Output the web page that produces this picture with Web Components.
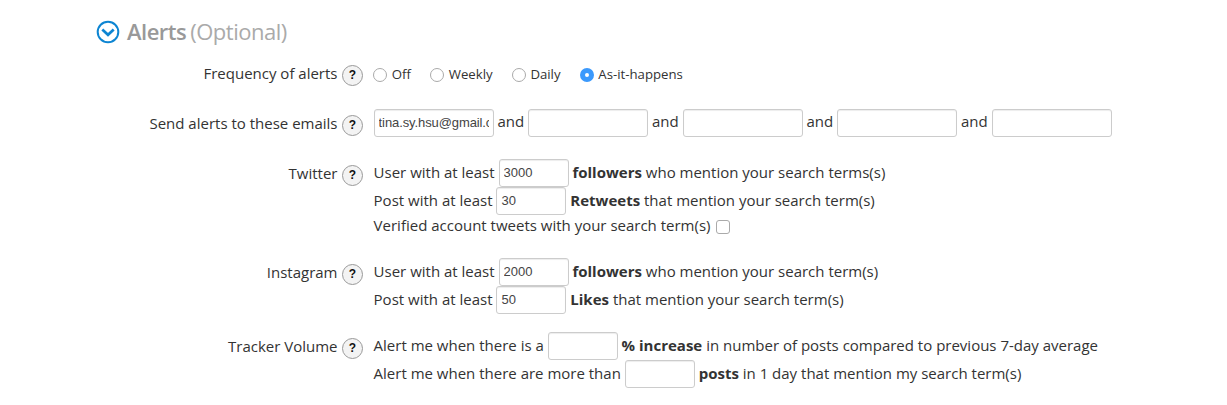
<!DOCTYPE html>
<html lang="en">
<head>
<meta charset="utf-8">
<title>Alerts</title>
<style>
  body {
    margin: 0;
    background: #fff;
    color: #333;
    font: 15px/20px "Open Sans", sans-serif;
  }
</style>
</head>
<body>
<alert-settings>
  <section-title slot="title" note="(Optional)">Alerts</section-title>

  <form-row label="Frequency of alerts" style="--height: 20px; --label-height: 16px; --icon-shift: 4px; --column-gap: 10.4px">
    <radio-option>Off</radio-option>
    <radio-option>Weekly</radio-option>
    <radio-option>Daily</radio-option>
    <radio-option checked>As-it-happens</radio-option>
  </form-row>

  <form-row label="Send alerts to these emails" style="--gap: 24px">
    <form-line style="--line: 24px"><text-box value="tina.sy.hsu@gmail.com" wide></text-box> and <text-box wide></text-box> and <text-box wide></text-box> and <text-box wide></text-box> and <text-box wide></text-box></form-line>
  </form-row>

  <form-row label="Twitter" style="--gap: 22px">
    <form-line>User with at least <text-box value="3000"></text-box> <b>followers</b> who mention your search terms(s)</form-line>
    <form-line>Post with at least <text-box value="30"></text-box> <b>Retweets</b> that mention your search term(s)</form-line>
    <form-line short>Verified account tweets with your search term(s) <check-box></check-box></form-line>
  </form-row>

  <form-row label="Instagram" style="--gap: 21px">
    <form-line>User with at least <text-box value="2000"></text-box> <b>followers</b> who mention your search term(s)</form-line>
    <form-line>Post with at least <text-box value="50"></text-box> <b>Likes</b> that mention your search term(s)</form-line>
  </form-row>

  <form-row label="Tracker Volume" style="--gap: 18px">
    <form-line>Alert me when there is a <text-box></text-box> <b>% increase</b> in number of posts compared to previous 7-day average</form-line>
    <form-line>Alert me when there are more than <text-box></text-box> <b>posts</b> in 1 day that mention my search term(s)</form-line>
  </form-row>
</alert-settings>

<script>
class AlertSettings extends HTMLElement {
  connectedCallback() {
    this.attachShadow({ mode: "open" });
    this.shadowRoot.innerHTML = `
      <style>
        :host {
          display: block;
          box-sizing: border-box;
          height: 405px;
          padding: 16px 0 0 96px;
          overflow: hidden;
        }
        .rows {
          display: flex;
          flex-direction: column;
        }
      </style>
      <slot name="title"></slot>
      <div class="rows"><slot></slot></div>
    `;
  }
}

class SectionTitle extends HTMLElement {
  connectedCallback() {
    this.attachShadow({ mode: "open" });
    this.shadowRoot.innerHTML = `
      <style>
        :host {
          display: flex;
          align-items: center;
          height: 32px;
          color: #999;
          font-size: 22px;
          letter-spacing: -0.5px;
        }
        svg {
          width: 24px;
          height: 24px;
          margin-right: 7px;
        }
        h2,
        span {
          margin: 0 0 2px;
          font-size: inherit;
          font-weight: 600;
        }
        span {
          margin-left: 4px;
          color: #aaa;
          font-weight: 400;
        }
      </style>
      <svg viewBox="0 0 24 24" fill="none" stroke="#0d85d2">
        <circle cx="12" cy="12" r="10.3" stroke-width="2"/>
        <path d="M6.3 9.6l5.7 5.2 5.7-5.2" stroke-width="2.7"/>
      </svg>
      <h2><slot></slot></h2>
      <span>${this.getAttribute("note")}</span>
    `;
  }
}

class FormRow extends HTMLElement {
  connectedCallback() {
    this.attachShadow({ mode: "open" });
    this.shadowRoot.innerHTML = `
      <style>
        :host {
          display: grid;
          grid-template-columns: 267px 1fr;
          column-gap: var(--column-gap, 10.6px);
          align-items: start;
          margin-top: var(--gap, 17px);
        }
        .label {
          display: flex;
          align-items: center;
          justify-content: flex-end;
          gap: 4.5px;
          height: var(--label-height, 28px);
        }
        help-icon {
          margin-top: var(--icon-shift, 5px);
        }
        .content {
          display: flow-root;
          min-height: var(--height, 28px);
        }
      </style>
      <div class="label"><span>${this.getAttribute("label")}</span><help-icon></help-icon></div>
      <div class="content"><slot></slot></div>
    `;
  }
}

class HelpIcon extends HTMLElement {
  connectedCallback() {
    this.attachShadow({ mode: "open" });
    this.shadowRoot.innerHTML = `
      <style>
        :host {
          display: flex;
          align-items: center;
          justify-content: center;
          box-sizing: border-box;
          width: 21px;
          height: 21px;
          border: 1px solid #999;
          border-radius: 50%;
          background: #f3f3f3;
          color: #111;
          font: bold 12px/19px "Liberation Sans", Arial, sans-serif;
        }
      </style>
      ?
    `;
  }
}

class FormLine extends HTMLElement {
  connectedCallback() {
    this.attachShadow({ mode: "open" });
    this.shadowRoot.innerHTML = `
      <style>
        :host {
          display: block;
          height: 28px;
          line-height: var(--line, 26px);
          white-space: nowrap;
        }
        :host([short]) {
          height: 22px;
          line-height: 20px;
        }
      </style>
      <slot></slot>
    `;
  }
}

class TextBox extends HTMLElement {
  connectedCallback() {
    this.attachShadow({ mode: "open" });
    this.shadowRoot.innerHTML = `
      <style>
        :host {
          display: inline-block;
          width: 70px;
          height: 28px;
          vertical-align: top;
        }
        :host([wide]) {
          width: 120px;
          letter-spacing: -0.1px;
        }
        input {
          display: block;
          box-sizing: border-box;
          width: 100%;
          height: 28px;
          margin: 0;
          padding: 3px 4px 5px;
          border: 1px solid #ccc;
          border-radius: 3px;
          background: #fff;
          box-shadow: inset 0 1px 1px rgba(0, 0, 0, 0.075);
          color: #444;
          font: 13px/18px "Liberation Sans", Arial, sans-serif;
          letter-spacing: inherit;
        }
      </style>
      <input type="text">
    `;
    this.shadowRoot.querySelector("input").value = this.getAttribute("value") || "";
  }
}

class RadioOption extends HTMLElement {
  connectedCallback() {
    this.attachShadow({ mode: "open" });
    this.shadowRoot.innerHTML = `
      <style>
        :host {
          display: inline-flex;
          align-items: center;
          height: 20px;
          margin-right: 15.5px;
          font-size: 13.2px;
          vertical-align: top;
        }
        i {
          box-sizing: border-box;
          width: 14px;
          height: 14px;
          margin-right: 4.4px;
          border: 1px solid #aaa;
          border-radius: 50%;
          background: #fff;
        }
        :host([checked]) i {
          border: 5px solid #3b99fc;
        }
        span {
          margin-bottom: 2px;
        }
      </style>
      <i></i><span><slot></slot></span>
    `;
  }
}

class CheckBox extends HTMLElement {
  connectedCallback() {
    this.attachShadow({ mode: "open" });
    this.shadowRoot.innerHTML = `
      <style>
        :host {
          display: inline-block;
          box-sizing: border-box;
          width: 14px;
          height: 14px;
          margin-left: 2px;
          border: 1px solid #aaa;
          border-radius: 3px;
          background: #fff;
          vertical-align: -3px;
        }
      </style>
    `;
  }
}

customElements.define("alert-settings", AlertSettings);
customElements.define("section-title", SectionTitle);
customElements.define("form-row", FormRow);
customElements.define("help-icon", HelpIcon);
customElements.define("form-line", FormLine);
customElements.define("text-box", TextBox);
customElements.define("radio-option", RadioOption);
customElements.define("check-box", CheckBox);
</script>
</body>
</html>
